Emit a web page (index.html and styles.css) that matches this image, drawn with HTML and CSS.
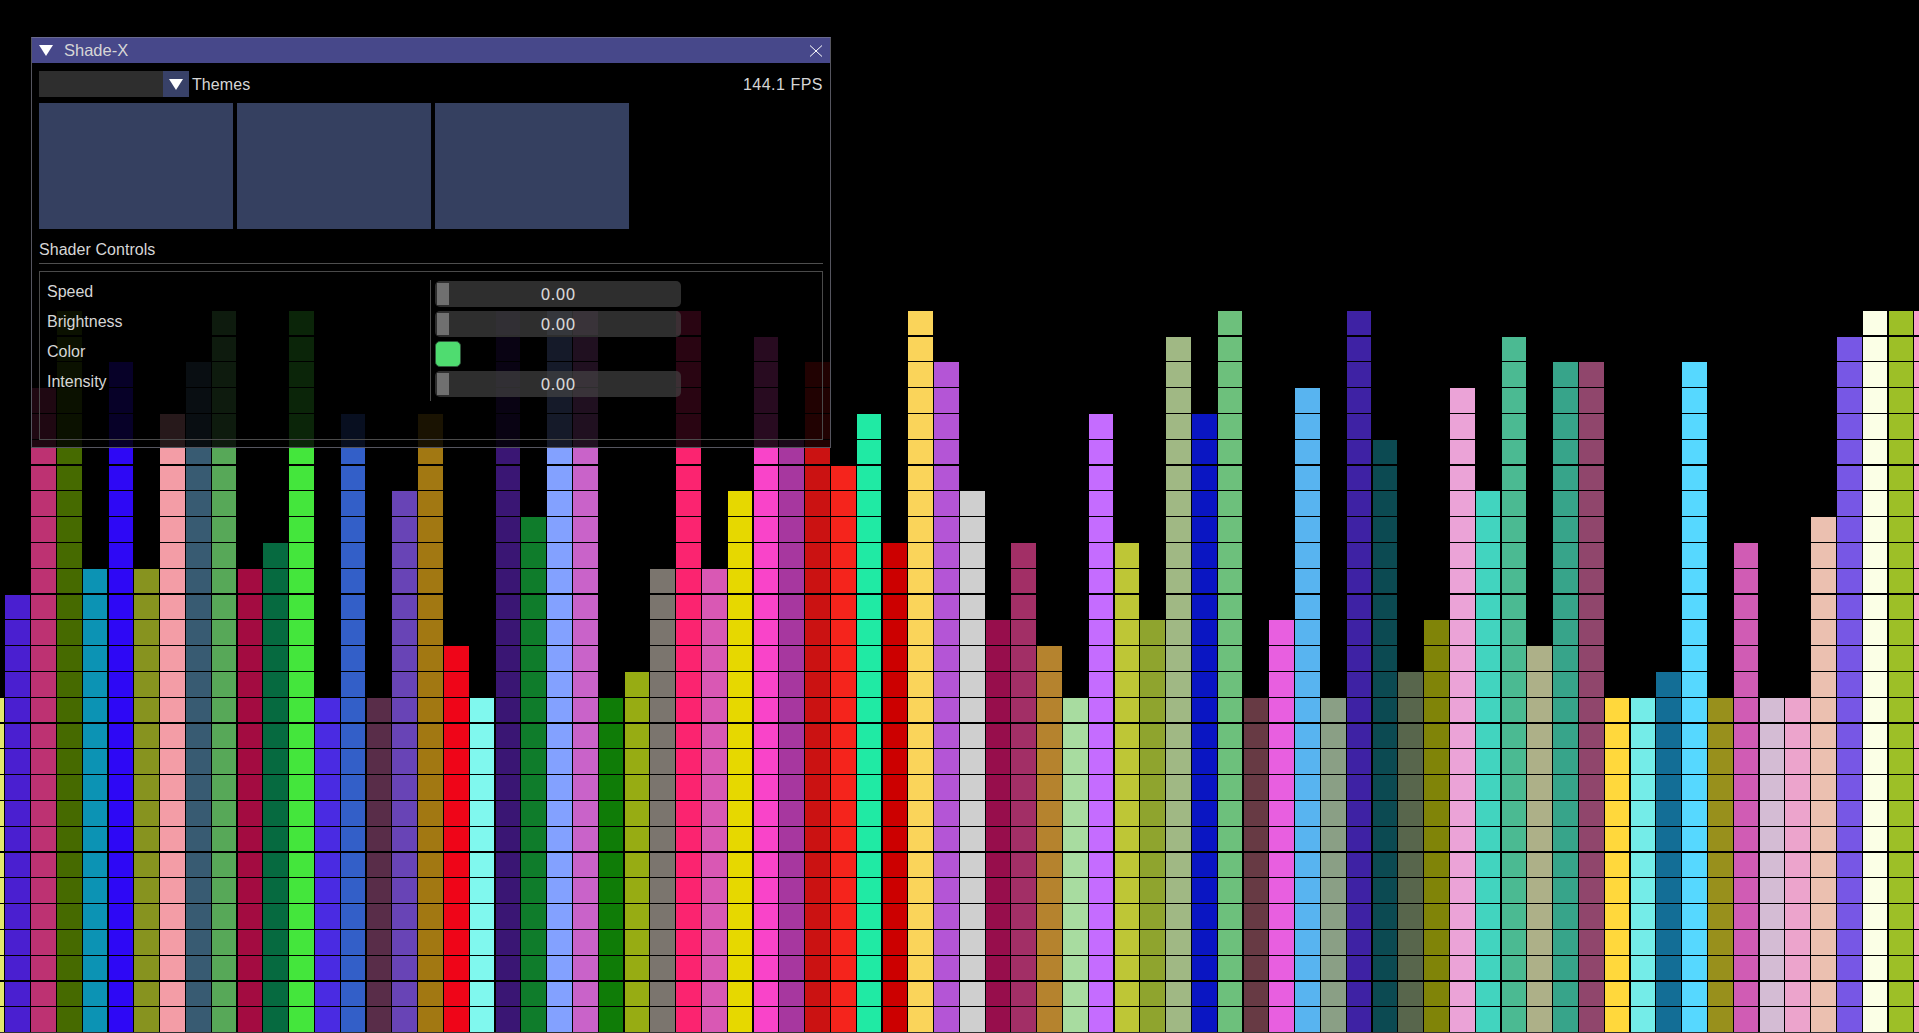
FILE: index.html
```html
<!DOCTYPE html>
<html lang="en">
<head>
    <meta charset="UTF-8">
    <meta name="viewport" content="width=device-width, initial-scale=1.0">
    <title>Shade-X</title>
    <link rel="stylesheet" href="styles.css">
</head>
<body>
    <!-- audio bars, --n is the number of lit cells -->
    <div class="bars">
        <div class="bar" style="--n:13;background-color:#e4e86c"></div>
        <div class="bar" style="--n:17;background-color:#4a1fd0"></div>
        <div class="bar" style="--n:25;background-color:#bd3272"></div>
        <div class="bar" style="--n:28;background-color:#466a00"></div>
        <div class="bar" style="--n:18;background-color:#0c93b4"></div>
        <div class="bar" style="--n:26;background-color:#2e08f5"></div>
        <div class="bar" style="--n:18;background-color:#87931f"></div>
        <div class="bar" style="--n:24;background-color:#f39da6"></div>
        <div class="bar" style="--n:26;background-color:#385b72"></div>
        <div class="bar" style="--n:28;background-color:#57a858"></div>
        <div class="bar" style="--n:18;background-color:#a30c41"></div>
        <div class="bar" style="--n:19;background-color:#066a40"></div>
        <div class="bar" style="--n:28;background-color:#44e63c"></div>
        <div class="bar" style="--n:13;background-color:#4a2be2"></div>
        <div class="bar" style="--n:24;background-color:#335fc8"></div>
        <div class="bar" style="--n:13;background-color:#592d49"></div>
        <div class="bar" style="--n:21;background-color:#6844b6"></div>
        <div class="bar" style="--n:24;background-color:#a27812"></div>
        <div class="bar" style="--n:15;background-color:#ef0518"></div>
        <div class="bar" style="--n:13;background-color:#80f8ee"></div>
        <div class="bar" style="--n:28;background-color:#3a1674"></div>
        <div class="bar" style="--n:20;background-color:#0f7c2b"></div>
        <div class="bar" style="--n:28;background-color:#83a1ff"></div>
        <div class="bar" style="--n:28;background-color:#c963c9"></div>
        <div class="bar" style="--n:13;background-color:#0f7c07"></div>
        <div class="bar" style="--n:14;background-color:#97ac13"></div>
        <div class="bar" style="--n:18;background-color:#7b756e"></div>
        <div class="bar" style="--n:28;background-color:#fb2470"></div>
        <div class="bar" style="--n:18;background-color:#d958b4"></div>
        <div class="bar" style="--n:21;background-color:#e6d800"></div>
        <div class="bar" style="--n:27;background-color:#f944c9"></div>
        <div class="bar" style="--n:23;background-color:#a7379f"></div>
        <div class="bar" style="--n:26;background-color:#cb1212"></div>
        <div class="bar" style="--n:22;background-color:#f5241c"></div>
        <div class="bar" style="--n:24;background-color:#20eaa4"></div>
        <div class="bar" style="--n:19;background-color:#cc0000"></div>
        <div class="bar" style="--n:28;background-color:#fad45a"></div>
        <div class="bar" style="--n:26;background-color:#b455d6"></div>
        <div class="bar" style="--n:21;background-color:#cfcfcf"></div>
        <div class="bar" style="--n:16;background-color:#970e4c"></div>
        <div class="bar" style="--n:19;background-color:#a22f66"></div>
        <div class="bar" style="--n:15;background-color:#b5832e"></div>
        <div class="bar" style="--n:13;background-color:#a8dca0"></div>
        <div class="bar" style="--n:24;background-color:#c56cff"></div>
        <div class="bar" style="--n:19;background-color:#bec636"></div>
        <div class="bar" style="--n:16;background-color:#8fa42e"></div>
        <div class="bar" style="--n:27;background-color:#a0b884"></div>
        <div class="bar" style="--n:24;background-color:#0a16c2"></div>
        <div class="bar" style="--n:28;background-color:#6dc07c"></div>
        <div class="bar" style="--n:13;background-color:#673a44"></div>
        <div class="bar" style="--n:16;background-color:#e85fe0"></div>
        <div class="bar" style="--n:25;background-color:#58b4f0"></div>
        <div class="bar" style="--n:13;background-color:#8a9f85"></div>
        <div class="bar" style="--n:28;background-color:#3e22a4"></div>
        <div class="bar" style="--n:23;background-color:#0c4a52"></div>
        <div class="bar" style="--n:14;background-color:#58664c"></div>
        <div class="bar" style="--n:16;background-color:#808408"></div>
        <div class="bar" style="--n:25;background-color:#eba3d7"></div>
        <div class="bar" style="--n:21;background-color:#42d4bf"></div>
        <div class="bar" style="--n:27;background-color:#4bba92"></div>
        <div class="bar" style="--n:15;background-color:#adb088"></div>
        <div class="bar" style="--n:26;background-color:#37a48a"></div>
        <div class="bar" style="--n:26;background-color:#90466c"></div>
        <div class="bar" style="--n:13;background-color:#ffd83c"></div>
        <div class="bar" style="--n:13;background-color:#74ece8"></div>
        <div class="bar" style="--n:14;background-color:#136e96"></div>
        <div class="bar" style="--n:26;background-color:#56d8ff"></div>
        <div class="bar" style="--n:13;background-color:#98901c"></div>
        <div class="bar" style="--n:19;background-color:#d05cb4"></div>
        <div class="bar" style="--n:13;background-color:#d4bcd4"></div>
        <div class="bar" style="--n:13;background-color:#eca4cc"></div>
        <div class="bar" style="--n:20;background-color:#ebc0b0"></div>
        <div class="bar" style="--n:27;background-color:#7757e5"></div>
        <div class="bar" style="--n:28;background-color:#fbffe6"></div>
        <div class="bar" style="--n:28;background-color:#9dbf27"></div>
        <div class="bar" style="--n:28;background-color:#f99fcb"></div>
    </div>

    <div class="window">
        <div class="titlebar">
            <svg class="arrow" viewBox="0 0 14 11"><path d="M0 0H14L7 11Z"/></svg>
            <span class="title">Shade-X</span>
            <svg class="close" viewBox="0 0 14 12"><path d="M1 0.5L13 11.5M13 0.5L1 11.5"/></svg>
        </div>
        <div class="content">
            <div class="top-row">
                <div class="combo">
                    <div class="combo-btn"><svg class="arrow" viewBox="0 0 14 11"><path d="M0 0H14L7 11Z"/></svg></div>
                </div>
                <span class="label">Themes</span>
                <span class="fps">144.1 FPS</span>
            </div>
            <div class="themes">
                <div class="theme"></div>
                <div class="theme"></div>
                <div class="theme"></div>
            </div>
            <div class="heading">Shader Controls</div>
            <div class="controls">
                <div class="names">
                    <div class="name">Speed</div>
                    <div class="name">Brightness</div>
                    <div class="name">Color</div>
                    <div class="name">Intensity</div>
                </div>
                <div class="values">
                    <div class="slider"><div class="grab"></div><span>0.00</span></div>
                    <div class="slider"><div class="grab"></div><span>0.00</span></div>
                    <div class="swatch"></div>
                    <div class="slider"><div class="grab"></div><span>0.00</span></div>
                </div>
            </div>
        </div>
    </div>
</body>
</html>
```

FILE: styles.css
```css
* {
    box-sizing: border-box;
}

body {
    margin: 0;
    height: 100vh;
    overflow: hidden;
    background: black;
    font-family: "Liberation Sans", sans-serif;
    font-size: 16px;
    color: #d6d6d6;
}

/* thin grey edge along the bottom of the window */
body::after {
    content: "";
    position: fixed;
    left: 0;
    right: 0;
    bottom: 0;
    height: 1px;
    background: #333;
}

.bars {
    position: relative;
    display: flex;
    align-items: flex-end;
    gap: 1.19px;
    height: 1033px;
    margin-left: -20.4px;
}

/* the black row lines go over all the bars so they stay level */
.bars::after {
    content: "";
    position: absolute;
    left: 0;
    right: 0;
    top: 0;
    bottom: 0;
    background-image: repeating-linear-gradient(to top, black -0.2px, black 1px, transparent 1px, transparent 25.6px);
}

.bar {
    flex: none;
    width: 24.61px;
    height: calc(var(--n) * 25.8px);
}

.window {
    position: absolute;
    left: 31px;
    top: 37px;
    width: 800px;
    height: 411px;
    background: rgba(0, 0, 0, 0.84);
    border: 1px solid #55555f;
    border-top-color: #6a6a90;
}

.titlebar {
    display: flex;
    align-items: center;
    height: 25px;
    padding: 0 7px;
    background: #47488a;
}

.arrow {
    width: 14px;
    height: 11px;
    fill: white;
}

.title {
    margin-left: 11px;
    font-size: 16.5px;
}

.close {
    width: 14px;
    height: 12px;
    margin-left: auto;
    fill: none;
    stroke: white;
    stroke-width: 1;
}

.content {
    padding: 8px 7px;
}

.top-row {
    display: flex;
    align-items: center;
    height: 26px;
}

.combo {
    display: flex;
    justify-content: flex-end;
    width: 150px;
    height: 26px;
    background: #2e2e2e;
}

.combo-btn {
    display: flex;
    align-items: center;
    justify-content: center;
    width: 26px;
    background: #384168;
}

.label {
    margin-left: 3px;
    padding-top: 2px;
    letter-spacing: 0.1px;
}

.fps {
    margin-left: auto;
    padding-top: 2px;
    letter-spacing: 0.5px;
}

.themes {
    display: flex;
    gap: 4px;
    margin-top: 6px;
}

.theme {
    width: 194px;
    height: 126px;
    background: #354060;
}

.heading {
    height: 34px;
    margin-top: 1px;
    padding-top: 11px;
    border-bottom: 1px solid #4e4e4e;
    letter-spacing: 0.05px;
}

.controls {
    display: flex;
    height: 169px;
    margin-top: 7px;
    border: 1px solid #4a4a4a;
}

.names {
    width: 390px;
    padding: 5px 7px;
}

.name {
    height: 30px;
    line-height: 30px;
}

.values {
    display: flex;
    flex-direction: column;
    gap: 4px;
    height: 121px;
    margin-top: 8px;
    padding: 1px 0 0 4px;
    border-left: 1px solid #4a4a4a;
}

.slider {
    position: relative;
    width: 246px;
    height: 26px;
    padding-top: 1px;
    border-radius: 5px;
    background: rgba(70, 70, 70, 0.65);
    font-family: "DejaVu Sans", sans-serif;
    font-size: 15.7px;
    line-height: 26px;
    text-align: center;
}

.grab {
    position: absolute;
    left: 2px;
    top: 2px;
    width: 12px;
    height: 22px;
    background: #707070;
}

.swatch {
    width: 26px;
    height: 26px;
    border: 1px solid #2e5a3c;
    border-radius: 5px;
    background: #4fdc70;
}
```
